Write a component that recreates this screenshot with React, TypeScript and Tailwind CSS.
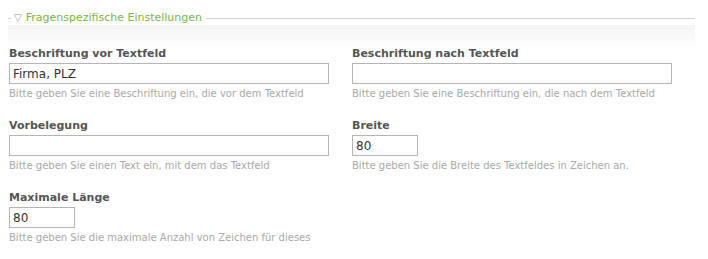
import React from 'react';

const fields = [
  [
    { label: 'Beschriftung vor Textfeld', value: 'Firma, PLZ', width: 'w-[320px]', help: 'Bitte geben Sie eine Beschriftung ein, die vor dem Textfeld' },
    { label: 'Beschriftung nach Textfeld', value: '', width: 'w-[320px]', help: 'Bitte geben Sie eine Beschriftung ein, die nach dem Textfeld' },
  ],
  [
    { label: 'Vorbelegung', value: '', width: 'w-[320px]', help: 'Bitte geben Sie einen Text ein, mit dem das Textfeld' },
    { label: 'Breite', value: '80', width: 'w-[66px]', help: 'Bitte geben Sie die Breite des Textfeldes in Zeichen an.' },
  ],
  [
    { label: 'Maximale Länge', value: '80', width: 'w-[66px]', help: 'Bitte geben Sie die maximale Anzahl von Zeichen für dieses' },
  ],
];

function Field({ label, value, width, help }: { label: string; value: string; width: string; help: string }) {
  return (
    <div className="flex flex-col">
      <label className="text-[11px] font-bold leading-[14px] text-[#555]">{label}</label>
      <input
        readOnly
        value={value}
        className={`${width} mt-[2px] h-[21px] border border-[#b5b5b5] bg-white px-[3px] text-[12px] text-[#333] outline-none`}
      />
      <p className="mt-[3px] text-[10px] leading-[13px] text-[#a8a8a8]">{help}</p>
    </div>
  );
}

export default function App() {
  return (
    <div className="w-[708px] h-[259px] bg-white pt-[11px] pl-[8px] pr-[13px] font-['DejaVu_Sans',sans-serif]">
      {/* Legend */}
      <div className="flex items-center">
        <span className="h-px w-[3px] bg-[#d0d0d0]" />
        <span className="ml-[3px] text-[10px] leading-none text-[#999]">▽</span>
        <span className="ml-[4px] text-[11px] leading-[14px] text-[#7cb342]">Fragenspezifische Einstellungen</span>
        <span className="ml-[4px] h-px flex-1 bg-[#d0d0d0]" />
      </div>
      <div className="h-[22px] bg-gradient-to-b from-[#f4f4f4] to-white" />

      {/* Fields */}
      <div className="flex flex-col gap-[19px] pl-[1px]">
        {fields.map((row, i) => (
          <div key={i} className="grid grid-cols-[343px_1fr]">
            {row.map((f) => (
              <Field key={f.label} {...f} />
            ))}
          </div>
        ))}
      </div>
    </div>
  );
}
